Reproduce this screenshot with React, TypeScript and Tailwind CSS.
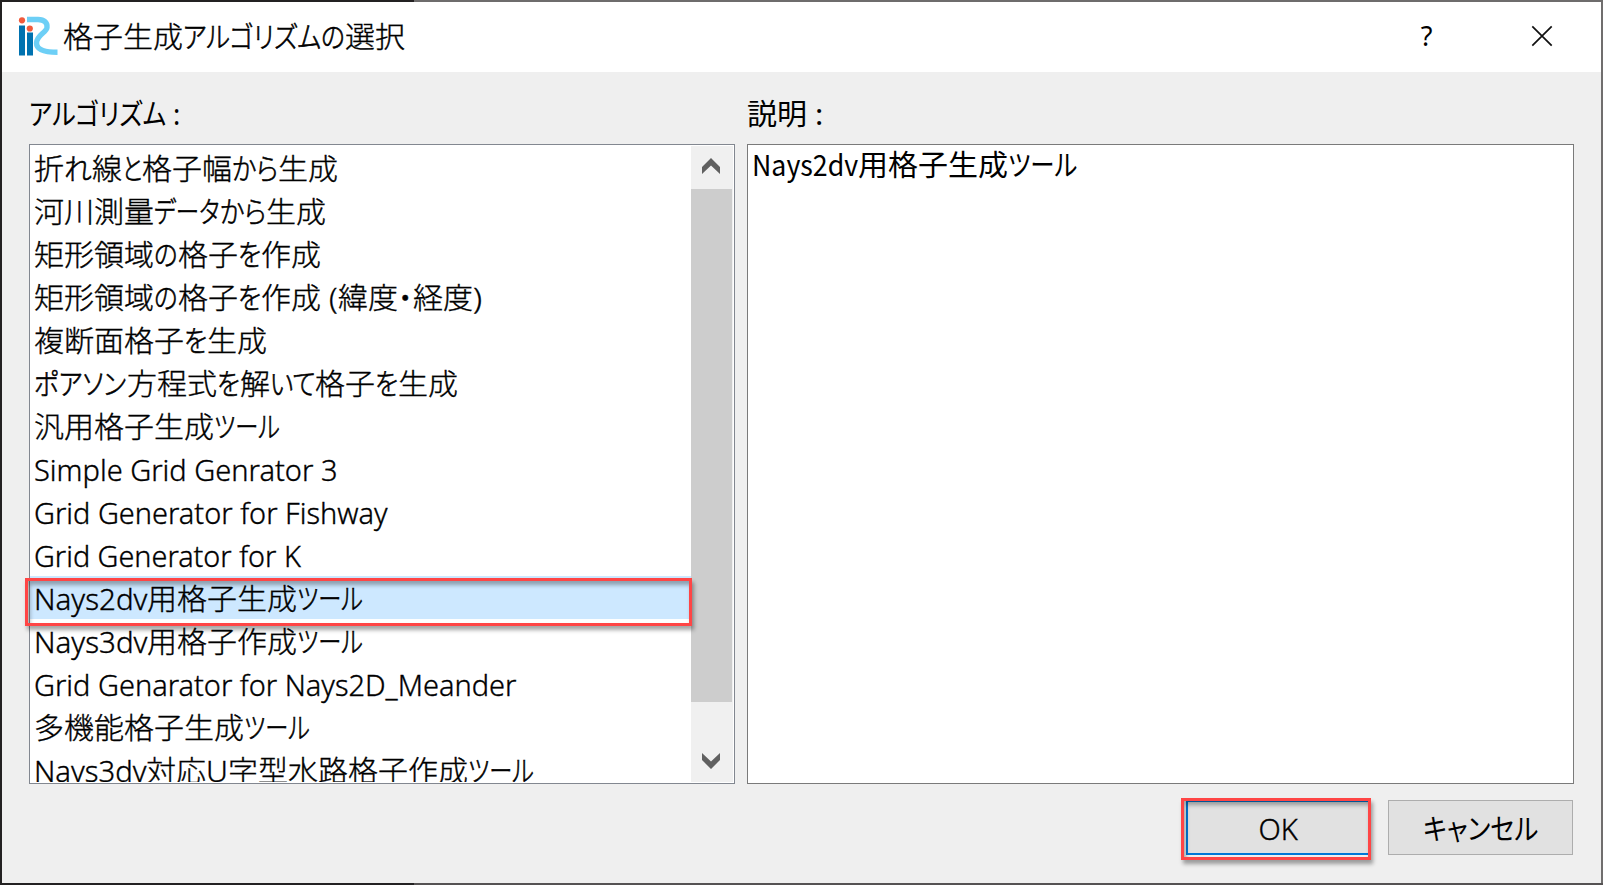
import { useLayoutEffect, useRef, useState } from 'react';

type Segment = [text: string, width: number];

/** A stretch of text condensed or widened to a given advance width. */
function Run({ text, width, light }: { text: string; width: number; light: boolean }) {
  const ref = useRef<HTMLSpanElement>(null);
  const [scale, setScale] = useState(1);
  useLayoutEffect(() => {
    if (ref.current && ref.current.offsetWidth) setScale(width / ref.current.offsetWidth);
  }, [text, width]);
  const kana = /^[\u3040-\u30ff]+$/.test(text);
  const lightClass = kana
    ? 'font-light [-webkit-text-stroke:0.6px_black]'
    : 'font-light [-webkit-text-stroke:0.35px_black]';
  return (
    <span className="flex shrink-0" style={{ width }}>
      <span
        ref={ref}
        className={`shrink-0 origin-left whitespace-pre [font-feature-settings:'palt'] ${light ? lightClass : 'font-normal'}`}
        style={{ transform: `scaleX(${scale})` }}
      >
        {text}
      </span>
    </span>
  );
}

function Line({ segments, className = '', light = false }: { segments: Segment[]; className?: string; light?: boolean }) {
  return (
    <div className={`flex h-[43px] shrink-0 text-[29px] leading-[43px] text-black ${className}`}>
      {segments.map(([text, width], i) => (
        <Run key={i} text={text} width={width} light={light} />
      ))}
    </div>
  );
}

const algorithms: Segment[][] = [
  [['折', 30], ['れ', 27.5], ['線', 30], ['と', 20.5], ['格子幅', 90], ['から', 46], ['生成', 60]],
  [['河川測量', 120], ['データ', 65.5], ['から', 46], ['生成', 60]],
  [['矩形領域', 120], ['の', 23.7], ['格子', 60], ['を', 23.3], ['作成', 60]],
  [['矩形領域', 120], ['の', 23.7], ['格子', 60], ['を', 23.3], ['作成', 60], [' (', 17], ['緯度', 60], ['・', 14.7], ['経度', 60], [')', 9]],
  [['複断面格子', 150], ['を', 23.3], ['生成', 60]],
  [['ポアソン', 92.5], ['方程式', 90], ['を', 23], ['解', 30], ['いて', 45.3], ['格子', 60], ['を', 23.3], ['生成', 60]],
  [['汎用格子生成', 180], ['ツール', 65.5]],
  [['Simple Grid Genrator 3', 303]],
  [['Grid Generator for Fishway', 354]],
  [['Grid Generator for K', 267]],
  [['Nays2dv', 113], ['用格子生成', 150], ['ツール', 65.5]],
  [['Nays3dv', 113], ['用格子作成', 150], ['ツール', 65.5]],
  [['Grid Genarator for Nays2D_Meander', 482]],
  [['多機能格子生成', 210], ['ツール', 65.5]],
  [['Nays3dv', 112], ['対応', 60], ['U', 22], ['字型水路格子作成', 240], ['ツール', 65.5]],
];

function Logo() {
  return (
    <svg width="42" height="42" viewBox="17 15 42 42" className="shrink-0">
      <path d="M27 19.5H38C44.5 19.5 47.5 23 47 27.5C46.5 32.5 36.5 35 36.5 43C36.5 49.5 43 52.3 57.5 52.3" fill="none" stroke="#6dcff6" strokeWidth="5.4" />
      <circle cx="22" cy="20.3" r="3.1" fill="#f15a3c" />
      <circle cx="29.8" cy="28.5" r="4.2" fill="#fff" />
      <circle cx="29.8" cy="28.5" r="3.1" fill="#f15a3c" />
      <path d="M19 25.5h6v30h-6zM27 32.5h6v23h-6z" fill="#0072b0" />
    </svg>
  );
}

function Chevron({ down = false }: { down?: boolean }) {
  return (
    <svg width="18" height="16" viewBox="0 0 18 16" className={down ? 'rotate-180' : ''}>
      <path d="M9 0L18 9V16L9 7.5L0 16V9Z" fill="#606060" />
    </svg>
  );
}

export default function App() {
  return (
    <div className="flex h-[885px] w-[1603px] flex-col overflow-hidden bg-[#efefef] font-['Noto_Sans','Noto_Sans_CJK_JP',sans-serif]">
      <div className="flex h-[2px] shrink-0">
        <div className="w-[414px] bg-[#232122]" />
        <div className="flex-1 bg-[#6e6c6c]" />
      </div>
      <div className="flex h-[881px] shrink-0">
        <div className="w-[2px] shrink-0 bg-[#232122]" />
        <div className="flex w-[1599px] flex-col">
          <header className="flex h-[70px] shrink-0 bg-white pl-[15px]">
            <div className="pt-[13px]"><Logo /></div>
            <Line light className="ml-[4px] mt-[13px]" segments={[['格子生成', 120], ['アルゴリズム', 138], ['の', 24], ['選択', 60]]} />
            <div className="ml-auto mr-[48px] flex pt-[23px]">
              <button className="mr-[97px] flex h-[22px] w-[15px] items-center justify-center text-[27px] font-normal leading-[22px]">?</button>
              <svg width="22" height="22" viewBox="0 0 22 22">
                <path d="M1.3 1.3L20.7 20.7M20.7 1.3L1.3 20.7" stroke="#111" strokeWidth="1.7" />
              </svg>
            </div>
          </header>

          <main className="flex gap-[12px] pl-[27px] pt-[20px]">
            <section className="w-[706px]">
              <Line className="mb-[9px]" segments={[['アルゴリズム', 137], [' :', 14]]} />
              <div className="relative h-[640px] border border-[#828790] bg-white pt-px">
                <div className="flex h-[636px]">
                  <div className="flex h-full w-[661px] shrink-0 flex-col overflow-hidden">
                    {algorithms.map((segments, i) => (
                      <Line key={i} light segments={segments} className={`pl-[4px] leading-[46px] ${i === 10 ? 'bg-[#cde8ff]' : ''}`} />
                    ))}
                  </div>
                  <div className="flex w-[42px] flex-col bg-[#f0f0f0]">
                    <div className="flex h-[43px] w-[40px] justify-center pt-[12px]"><Chevron /></div>
                    <div className="h-[513px] w-[41px] bg-[#cdcdcd]" />
                    <div className="flex w-[40px] justify-center pt-[51px]"><Chevron down /></div>
                  </div>
                </div>
                <div className="absolute -left-[5px] top-[433px] h-[48px] w-[667px] border-[3px] border-[#ff4545] shadow-[2px_4px_4px_rgba(0,0,0,0.35),inset_2px_4px_4px_rgba(0,0,0,0.32)]" />
              </div>
            </section>
            <section className="w-[827px]">
              <Line className="mb-[9px]" segments={[['説明', 60], [' :', 16]]} />
              <div className="h-[640px] border border-[#7a7a7a] bg-white pl-[4px]">
                <Line className="-mt-[3px] font-['Noto_Sans_CJK_JP',sans-serif]" segments={[['Nays2dv', 106], ['用格子生成', 150], ['ツール', 69]]} />
              </div>
            </section>
          </main>

          <footer className="flex gap-[17px] pl-[1184px] pt-[16px]">
            <div className="relative">
              <button className="flex h-[55px] w-[185px] justify-center border-2 border-[#0078d7] bg-[#e1e1e1] pt-[5px]">
                <Line light segments={[['OK', 39]]} className="pr-px" />
              </button>
              <div className="absolute -left-[5px] -top-[2px] h-[62px] w-[190px] border-[3px] border-[#ff4545] shadow-[2px_4px_4px_rgba(0,0,0,0.35),inset_2px_4px_4px_rgba(0,0,0,0.32)]" />
            </div>
            <button className="flex h-[55px] w-[185px] justify-center border border-[#adadad] bg-[#e1e1e1] pt-[6px]">
              <Line segments={[['キャンセル', 115]]} />
            </button>
          </footer>
        </div>
        <div className="w-[2px] shrink-0 bg-[#706e6e]" />
      </div>
      <div className="flex h-[2px] shrink-0">
        <div className="w-[414px] bg-[#232122]" />
        <div className="flex-1 bg-[#555253]" />
      </div>
    </div>
  );
}
